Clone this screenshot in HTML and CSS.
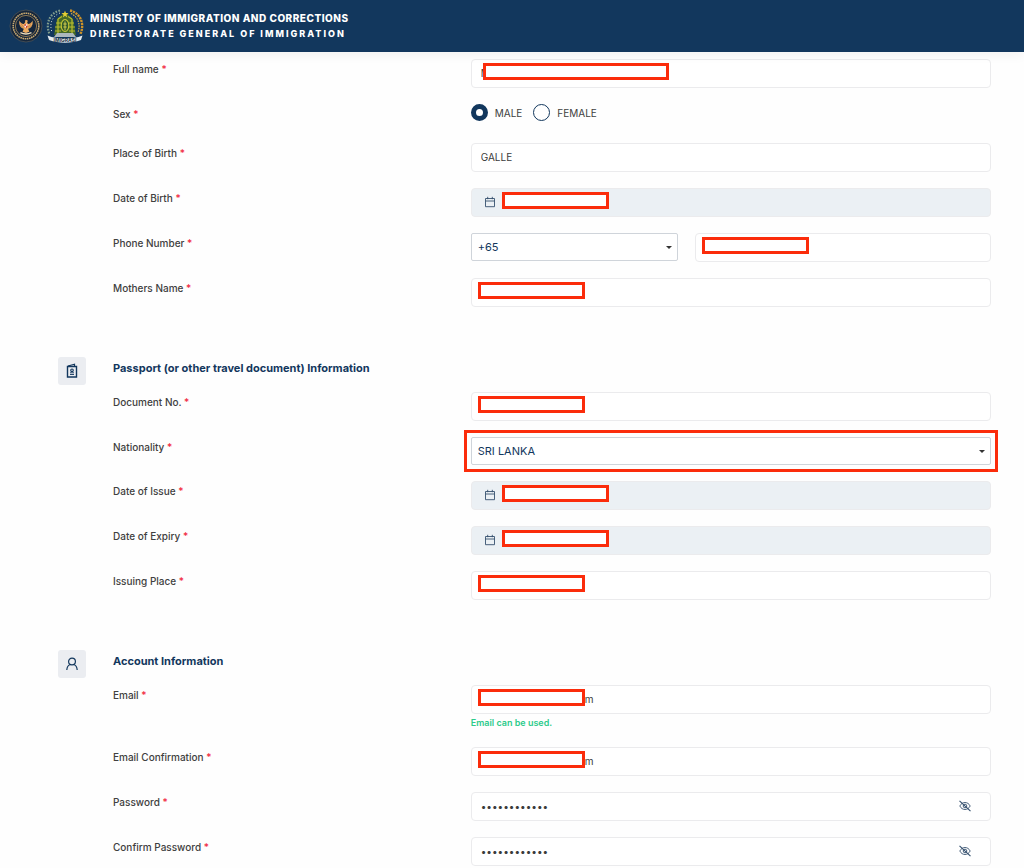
FILE: index.html
```html
<!DOCTYPE html>
<html lang="en">
<head>
  <meta charset="UTF-8" />
  <meta name="viewport" content="width=device-width, initial-scale=1.0"/>
  <title>Directorate General of Immigration - Registration</title>
  <link rel="stylesheet" href="styles.css">
</head>
<body>

  <!-- shared icons -->
  <svg class="sprite" aria-hidden="true">
    <symbol id="icon-calendar" viewBox="0 0 12 12">
      <path d="M1.5 2.5h9v8.2h-9zM1.5 5h9M3.7 .8v2.4M8.3 .8v2.4" fill="none" stroke="currentColor" stroke-width=".9"/>
    </symbol>
    <symbol id="icon-eye-off" viewBox="0 0 12 12">
      <path d="M.8 6C2 3.7 3.9 2.5 6 2.5S10 3.7 11.2 6C10 8.3 8.1 9.5 6 9.5S2 8.3 .8 6z" fill="none" stroke="currentColor" stroke-width=".9"/>
      <circle cx="6" cy="6" r="1.8" fill="none" stroke="currentColor" stroke-width=".9"/>
      <path d="M.5 .8l11 10.4" stroke="currentColor" stroke-width="1.1"/>
    </symbol>
  </svg>

  <header class="topbar">
    <svg class="logo" viewBox="0 0 34 34" aria-hidden="true">
      <circle cx="17" cy="17" r="16" fill="#15263c" stroke="#4d5355" stroke-width=".8"/>
      <circle cx="17" cy="17" r="12.8" fill="none" stroke="#c9a970" stroke-width="1.6" stroke-dasharray="1.6 .6"/>
      <circle cx="17" cy="17" r="10.6" fill="none" stroke="#a98955" stroke-width=".8"/>
      <g transform="translate(2.500 2.400) scale(.85)">
        <path d="M16 10.500l2.200-.5 1 1.400-.8 1.800 1 1.500c2.500 0 4.300-1.500 5.300-4 .8 4-.4 7.400-3.400 9.200l-1.800.6 1.500 3.500-4 1.500-4-1.500 1.500-3.500-1.800-.6c-3-1.800-4.200-5.200-3.400-9.200 1 2.500 2.800 4 5.300 4l1.500-1.800z" fill="#ecac62"/>
        <path d="M11 13.500c.8 2.400 2 3.800 3.600 4.500M23 13.500c-.8 2.400-2 3.800-3.600 4.500M10.500 16c.8 1.500 2 2.600 3.500 3M23.500 16c-.8 1.500-2 2.600-3.500 3" fill="none" stroke="#a8642f" stroke-width=".6"/>
        <path d="M15.200 15h3.600v3.200L17 20l-1.800-1.800z" fill="#c83c2c"/>
        <path d="M17 15h1.800v2H17zM15.200 17H17v2.500l-1.800-1.300z" fill="#fff"/>
        <path d="M10.500 25c4 2 9 2 13 0" fill="none" stroke="#f1dfbd" stroke-width="1.600"/>
      </g>
    </svg>
    <svg class="logo" viewBox="0 0 38 36" aria-hidden="true">
      <path d="M14 2.500C4 5 -1 15 3.500 26" fill="none" stroke="#829e8e" stroke-width="2.200" stroke-dasharray="1.600 1.400"/>
      <path d="M14 5C6 8 3 16 6 24" fill="none" stroke="#d7dfd8" stroke-width="1" stroke-dasharray="1 2"/>
      <path d="M24 2.500C34 5 39 15 34.500 26" fill="none" stroke="#cc9229" stroke-width="2.400" stroke-dasharray="2.200 .8"/>
      <path d="M25 5.500C31.500 8.500 35 16 32 24" fill="none" stroke="#e3b749" stroke-width="1.100" stroke-dasharray="1.500 1"/>
      <path d="M19 4l8 7 3 16H8l3-16z" fill="#466928"/>
      <path d="M19 2.500l.9 2.600h2.700l-2.200 1.700.8 2.600-2.200-1.600-2.200 1.600.8-2.600-2.200-1.700h2.700z" fill="#e5ce36"/>
      <path d="M12 11l4-2.500M26 11l-4-2.500M10 15h5M23 15h5M9 19h6M23 19h6M9 23h6M23 23h6M12 11v14M26 11v14" stroke="#b9bd30" stroke-width="1.200" fill="none"/>
      <ellipse cx="19" cy="17.500" rx="3.800" ry="6" fill="#355c2c" stroke="#c9ca35" stroke-width="1.100"/>
      <path d="M19 13.500v9M17.300 16h3.400M17.300 19h3.400" stroke="#e0d650" stroke-width=".9"/>
      <path d="M11 25h16l3 4H8z" fill="#adb8bd"/>
      <path d="M1.500 27.500l4 1.500c9 2 18 2 27 0l4-1.500-1.500 4.500C25 35.500 13 35.500 3 32z" fill="#e6ebee"/>
      <text x="19" y="33.500" class="ribbon-text">IMIGRASI</text>
    </svg>
    <div class="brand">
      <div class="brand-ministry">MINISTRY OF IMMIGRATION AND CORRECTIONS</div>
      <div class="brand-directorate">DIRECTORATE GENERAL OF IMMIGRATION</div>
    </div>
  </header>

  <form class="form">

    <section class="section">
      <div class="row">
        <label for="fullName">Full name <b>*</b></label>
        <div class="field">
          <input type="text" id="fullName" value="M">
          <span class="mark mark-wide"></span>
        </div>
      </div>
      <div class="row">
        <span class="label" id="sexLabel">Sex <b>*</b></span>
        <div class="radios" role="radiogroup" aria-labelledby="sexLabel">
          <label><input type="radio" name="sex" value="male" checked>MALE</label>
          <label><input type="radio" name="sex" value="female">FEMALE</label>
        </div>
      </div>
      <div class="row">
        <label for="birthPlace">Place of Birth <b>*</b></label>
        <div class="field"><input type="text" id="birthPlace" value="GALLE"></div>
      </div>
      <div class="row">
        <label for="birthDate">Date of Birth <b>*</b></label>
        <div class="field date">
          <input type="text" id="birthDate" readonly>
          <svg class="calendar"><use href="#icon-calendar"/></svg>
          <span class="mark"></span>
        </div>
      </div>
      <div class="row">
        <label for="phone">Phone Number <b>*</b></label>
        <div class="phone">
          <div class="select">
            <select aria-label="Country code"><option>+65</option></select>
          </div>
          <div class="field">
            <input type="text" id="phone">
            <span class="mark"></span>
          </div>
        </div>
      </div>
      <div class="row">
        <label for="motherName">Mothers Name <b>*</b></label>
        <div class="field">
          <input type="text" id="motherName">
          <span class="mark"></span>
        </div>
      </div>
    </section>

    <section class="section">
      <div class="section-icon">
        <svg viewBox="0 0 14 16" fill="none" stroke="currentColor">
          <path d="M2.500 3.500h9v10.500h-9z" stroke-width="1.400"/>
          <path d="M3 3L9.500 1.200v2" stroke-width="1.200"/>
          <circle cx="7" cy="7.300" r="1.300" stroke-width="1.100"/>
          <path d="M5 9.800h4M5 11.500h4" stroke-width=".9"/>
        </svg>
      </div>
      <h2>Passport (or other travel document) Information</h2>
      <div class="row">
        <label for="docNo">Document No. <b>*</b></label>
        <div class="field">
          <input type="text" id="docNo">
          <span class="mark"></span>
        </div>
      </div>
      <div class="row">
        <label for="nationality">Nationality <b>*</b></label>
        <div class="select highlighted">
          <select id="nationality"><option>SRI LANKA</option></select>
        </div>
      </div>
      <div class="row">
        <label for="issueDate">Date of Issue <b>*</b></label>
        <div class="field date">
          <input type="text" id="issueDate" readonly>
          <svg class="calendar"><use href="#icon-calendar"/></svg>
          <span class="mark"></span>
        </div>
      </div>
      <div class="row">
        <label for="expiryDate">Date of Expiry <b>*</b></label>
        <div class="field date">
          <input type="text" id="expiryDate" readonly>
          <svg class="calendar"><use href="#icon-calendar"/></svg>
          <span class="mark"></span>
        </div>
      </div>
      <div class="row">
        <label for="issuePlace">Issuing Place <b>*</b></label>
        <div class="field">
          <input type="text" id="issuePlace">
          <span class="mark"></span>
        </div>
      </div>
    </section>

    <section class="section">
      <div class="section-icon">
        <svg viewBox="0 0 14 16" fill="none" stroke="currentColor" stroke-width="1.200">
          <circle cx="7" cy="5.500" r="3.400"/>
          <path d="M1.800 14c.2-3 1.700-5 3.700-5.500M12.200 14c-.2-3-1.700-5-3.700-5.500"/>
        </svg>
      </div>
      <h2>Account Information</h2>
      <div class="row">
        <label for="email">Email <b>*</b></label>
        <div>
          <div class="field email">
            <input type="text" id="email" value="m">
            <span class="mark"></span>
          </div>
          <p class="hint">Email can be used.</p>
        </div>
      </div>
      <div class="row">
        <label for="emailConfirm">Email Confirmation <b>*</b></label>
        <div class="field email">
          <input type="text" id="emailConfirm" value="m">
          <span class="mark"></span>
        </div>
      </div>
      <div class="row">
        <label for="password">Password <b>*</b></label>
        <div class="field">
          <input type="password" id="password" value="abcdefghijkl">
          <button type="button" class="toggle" aria-label="Show password"><svg><use href="#icon-eye-off"/></svg></button>
        </div>
      </div>
      <div class="row">
        <label for="passwordConfirm">Confirm Password <b>*</b></label>
        <div class="field">
          <input type="password" id="passwordConfirm" value="abcdefghijkl">
          <button type="button" class="toggle" aria-label="Show password"><svg><use href="#icon-eye-off"/></svg></button>
        </div>
      </div>
    </section>

  </form>

  <script>
    document.querySelectorAll(".toggle").forEach(btn => {
      btn.addEventListener("click", () => {
        const input = btn.previousElementSibling;
        input.type = input.type === "password" ? "text" : "password";
      });
    });
  </script>

</body>
</html>
```
FILE: styles.css
```css
* {
  box-sizing: border-box;
}

body {
  margin: 0;
  font-family: Inter, "Liberation Sans", sans-serif;
  font-size: 10px;
  color: #404040;
  background: #fefefe;
}

.sprite {
  display: none;
}

.topbar {
  position: sticky;
  top: 0;
  z-index: 10;
  display: flex;
  align-items: center;
  gap: 3px;
  height: 52px;
  padding: 0 9px;
  background: #12375d;
  color: white;
  box-shadow: 0 2px 12px rgba(0, 0, 0, 0.06);
}

.logo {
  width: 34px;
  height: 34px;
}

.logo + .logo {
  width: 38px;
  height: 36px;
}

.ribbon-text {
  font-size: 5px;
  font-weight: bold;
  text-anchor: middle;
  fill: #27384a;
}

.brand {
  margin-left: 3px;
  line-height: 15px;
  font-weight: 800;
}

.brand-ministry {
  font-size: 10px;
  letter-spacing: 0.5px;
}

.brand-directorate {
  font-size: 9px;
  letter-spacing: 2px;
}

.form {
  padding: 7px 33px 2px 58px;
}

.section {
  position: relative;
  display: grid;
  gap: 16px;
  padding-left: 55px;
}

.section + .section {
  margin-top: 49px;
}

.section-icon {
  position: absolute;
  top: 1px;
  left: 0;
  display: flex;
  align-items: center;
  justify-content: center;
  width: 28px;
  height: 28px;
  border-radius: 3px;
  background: #ebedf1;
  color: #12375d;
}

.section-icon svg {
  width: 14px;
  height: 16px;
}

h2 {
  margin: 0;
  font-size: 11px;
  line-height: 24px;
  font-weight: 700;
  color: #12375d;
}

h2 + .row {
  margin-top: -4px;
}

.row {
  display: grid;
  grid-template-columns: 11fr 16fr;
  align-items: start;
}

.row > label,
.label {
  line-height: 20px;
  font-weight: 500;
}

.row b {
  color: #f1263c;
  font-weight: 500;
}

.field,
.select {
  position: relative;
}

input[type="text"],
input[type="password"] {
  display: block;
  width: 100%;
  height: 29px;
  padding: 0 9px 2px;
  border: 1px solid #ebebed;
  border-radius: 4px;
  background: #fff;
  color: #3b3b3b;
  font-family: inherit;
  font-size: 10px;
}

.date input[type="text"] {
  background: #ebf0f4;
}

.email input[type="text"] {
  padding-left: 113px;
}

.calendar {
  position: absolute;
  top: 8px;
  left: 13px;
  width: 12px;
  height: 12px;
  color: #35506e;
}

.mark {
  position: absolute;
  top: 4px;
  left: 7px;
  width: 107px;
  height: 17px;
  border: 3px solid #fb2c0b;
  background: white;
}

.mark-wide {
  left: 12px;
  width: 186px;
}

.date .mark {
  left: 31px;
}

.radios {
  display: flex;
  gap: 11px;
  height: 23px;
}

.radios label {
  display: flex;
  align-items: center;
  gap: 7px;
  height: 17px;
}

input[type="radio"] {
  appearance: none;
  width: 17px;
  height: 17px;
  margin: 0;
  border: 1px solid #12375d;
  border-radius: 50%;
  background: white;
}

input[type="radio"]:checked {
  border-width: 5px;
}

.phone {
  display: grid;
  grid-template-columns: 7fr 10fr;
  gap: 17px;
}

select {
  display: block;
  appearance: none;
  width: 100%;
  height: 28px;
  padding: 0 6px;
  border: 1px solid #cfd4da;
  border-radius: 2px;
  background: white;
  color: #12375d;
  font-family: inherit;
  font-size: 11px;
}

.select::after {
  content: "";
  position: absolute;
  top: 13px;
  right: 6px;
  border: 3px solid transparent;
  border-top-color: #333;
  border-bottom: 0;
}

/* red frame around the important field */
.highlighted::before {
  content: "";
  position: absolute;
  inset: -7px;
  border: 3px solid #fb2c0b;
}

.hint {
  margin: 0;
  font-size: 9px;
  line-height: 17px;
  font-weight: 600;
  color: #2dcb8b;
}

.toggle {
  position: absolute;
  top: 7px;
  right: 19px;
  width: 14px;
  height: 14px;
  padding: 1px;
  border: none;
  background: none;
  color: #35506e;
  cursor: pointer;
}

.toggle svg {
  display: block;
  width: 12px;
  height: 12px;
}
```
